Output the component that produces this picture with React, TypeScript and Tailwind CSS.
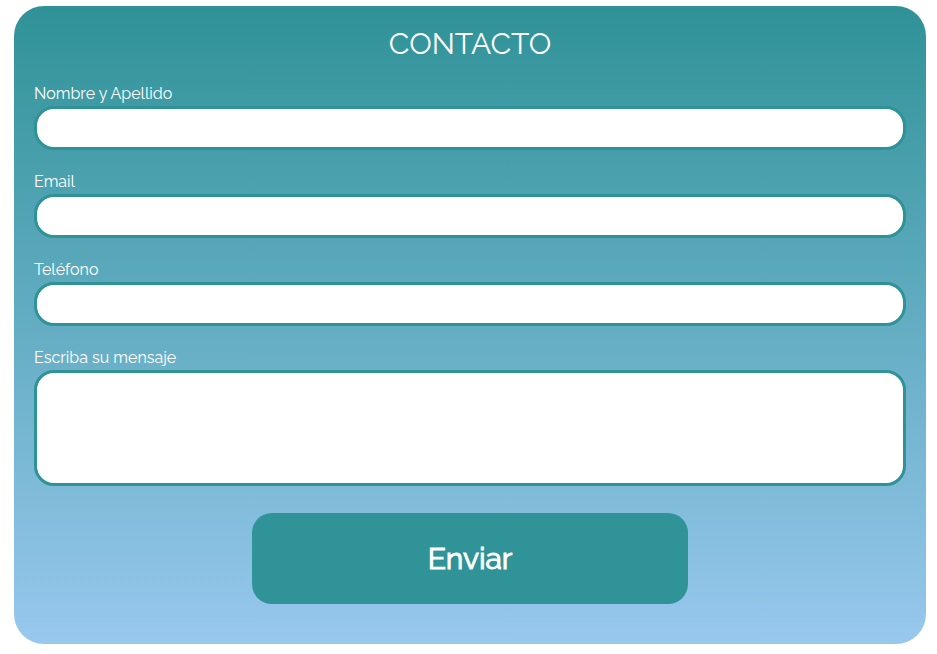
import React from "react";

const fieldClass =
  "block w-full rounded-[20px] border-3 border-[#2f9297] bg-white px-4 text-base text-gray-800 outline-none";

function TextField({ id, label, type }: { id: string; label: string; type: string }) {
  return (
    <div className="mb-5">
      <label htmlFor={id} className="block h-6 leading-6">
        {label}
      </label>
      <input id={id} name={id} type={type} className={`${fieldClass} h-11`} />
    </div>
  );
}

export default function App() {
  return (
    <main className="pt-1.5 pr-[11px] pb-2.5 pl-3.5 font-['Raleway','Lato',sans-serif]">
      <form
        className="rounded-[30px] bg-linear-to-b/srgb from-[#2f9297] to-[#98c8ee] px-5 pt-5 pb-10 text-base text-white"
        onSubmit={(e) => e.preventDefault()}
      >
        <h1 className="mb-5 text-center text-3xl leading-9">CONTACTO</h1>
        <TextField id="nombre" label="Nombre y Apellido" type="text" />
        <TextField id="email" label="Email" type="email" />
        <TextField id="telefono" label="Teléfono" type="tel" />
        <div>
          <label htmlFor="mensaje" className="block h-6 leading-6">
            Escriba su mensaje
          </label>
          <textarea id="mensaje" name="mensaje" className={`${fieldClass} h-29 resize-none py-2`} />
        </div>
        <button
          type="submit"
          className="mx-auto mt-[27px] block h-[91px] w-1/2 rounded-[20px] bg-[#309398] text-3xl leading-9 text-white [-webkit-text-stroke:1px_white]"
        >
          Enviar
        </button>
      </form>
    </main>
  );
}
